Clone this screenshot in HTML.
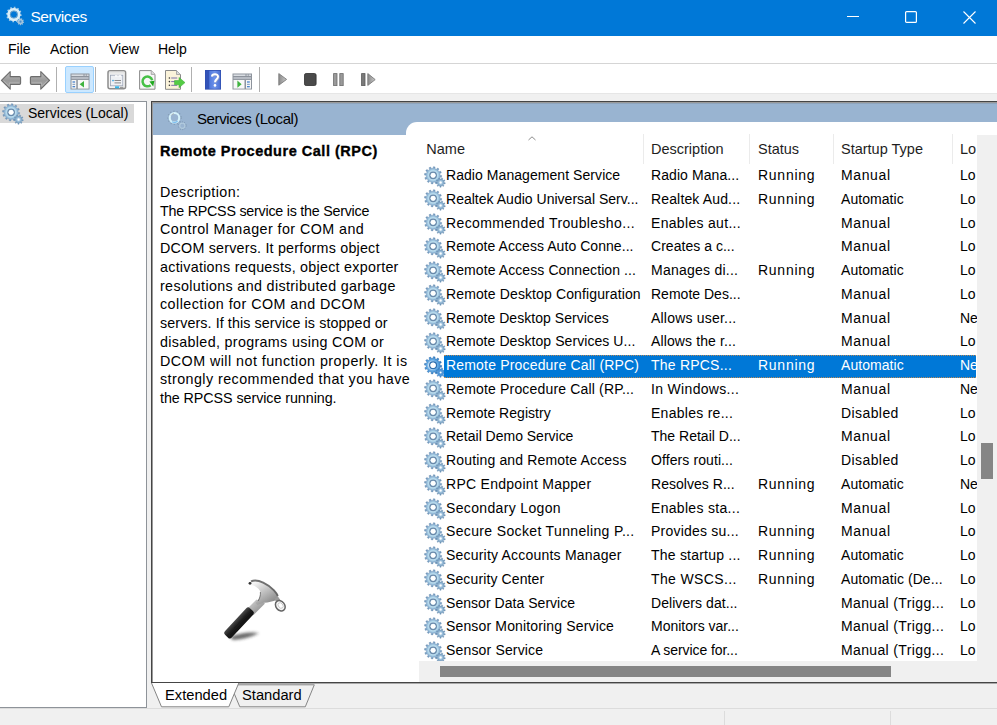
<!DOCTYPE html>
<html><head><meta charset="utf-8">
<style>
*{box-sizing:border-box}
html,body{margin:0;padding:0}
body{width:997px;height:725px;overflow:hidden;position:relative;background:#f0f0f0;font-family:"Liberation Sans",sans-serif;color:#000}
.abs{position:absolute}
svg.abs{overflow:visible}
#title{left:0;top:0;width:997px;height:36px;background:#0078d7}
#title .t{position:absolute;left:30.4px;top:7.6px;font-size:15.5px;letter-spacing:-0.37px;color:#fff;line-height:18px}
#menu{left:0;top:36px;width:997px;height:27px;background:#fff}
#menu span{position:absolute;top:5px;font-size:14px;line-height:16px}
#mline{left:0;top:63px;width:997px;height:1px;background:#d5d5d5}
#tool{left:0;top:64px;width:997px;height:29px;background:#fff}
.sep{position:absolute;top:67px;width:1px;height:25px;background:#b0b0b0}
#left{left:0;top:101px;width:147px;height:607px;background:#fff;border:1px solid #8e9399;border-left:none}
#right{left:151px;top:101px;width:846px;height:582px;background:#fff;border-top:1px solid #454545;border-left:1px solid #454545;border-bottom:1px solid #454545;box-shadow:inset 1px 1px 0 #9a9a9a}
#hdr{left:153px;top:103px;width:844px;height:32px;background:#99b4d1}
#tab{left:406px;top:122px;width:591px;height:14px;background:#fff;border-top-left-radius:11px}
.hdrt{position:absolute;left:197px;top:110px;font-size:15px;line-height:18px;color:#000}
.dt{position:absolute;left:160px;font-size:14.5px;line-height:18px;color:#000;white-space:nowrap;-webkit-text-stroke:0.35px #000}
.dl{position:absolute;left:160px;font-size:14.3px;line-height:18px;color:#000;white-space:nowrap}
.colh{position:absolute;top:140.5px;font-size:14.5px;line-height:17px;color:#1e1e1e}
.csep{position:absolute;top:134px;width:1px;height:30px;background:#ebebeb}
.row{position:absolute;left:420px;width:557px;height:23.75px}
.row .gi{position:absolute;left:3.5px;top:2.5px}
.row span{position:absolute;top:4px;font-size:14px;line-height:17px;white-space:nowrap;color:#000}
.row .c0{left:26px}.row .c1{left:231px}.row .c2{left:338px}.row .c3{left:421px}.row .c4{left:540px}
.row .hl{display:none}
.row.sel .hl{display:block;position:absolute;left:24px;top:1.8px;width:532px;height:22.8px;background:#0078d7;border-top:1px dotted #b88a5a;border-bottom:1px dotted #b88a5a}
.row.sel span{color:#fff}
#vtrack{left:977px;top:135px;width:20px;height:547px;background:#f0f0f0}
#vthumb{left:981px;top:443px;width:12px;height:36px;background:#858585}
#htrack{left:419px;top:661px;width:558px;height:21px;background:#f0f0f0}
#hthumb{left:440px;top:666px;width:451px;height:11px;background:#858585}
#status{left:0;top:708px;width:997px;height:17px;background:#f0f0f0;border-top:1px solid #dcdcdc}
.ssep{position:absolute;top:711px;width:1px;height:14px;background:#dcdcdc}
.tabt{position:absolute;top:687px;font-size:14.7px;line-height:17px}
</style></head><body>
<svg width="0" height="0" style="position:absolute">
<defs>
<radialGradient id="gg" cx="0.5" cy="0.5" r="0.5">
<stop offset="0.3" stop-color="#d6edf8"/><stop offset="0.58" stop-color="#b2d7eb"/><stop offset="0.8" stop-color="#88aed0"/><stop offset="1" stop-color="#5f86ad"/>
</radialGradient>
<radialGradient id="gg2" cx="0.5" cy="0.5" r="0.5">
<stop offset="0" stop-color="#f0f8fc"/><stop offset="0.4" stop-color="#9dc1dc"/><stop offset="1" stop-color="#5d85ac"/>
</radialGradient>
<radialGradient id="ggs" cx="0.45" cy="0.5" r="0.55">
<stop offset="0.3" stop-color="#ffffff"/><stop offset="0.55" stop-color="#6aaee6"/><stop offset="0.85" stop-color="#3c8ad0"/><stop offset="1" stop-color="#2b6fb0"/>
</radialGradient>
<symbol id="gear" viewBox="0 0 22 22" overflow="visible">
<path d="M16.00 9.24 L17.70 9.55 L17.47 11.27 L15.75 11.13 L15.10 12.70 L16.42 13.82 L15.37 15.19 L13.95 14.21 L12.60 15.25 L13.18 16.87 L11.58 17.53 L10.84 15.98 L9.16 16.20 L8.85 17.90 L7.13 17.67 L7.27 15.95 L5.70 15.30 L4.58 16.62 L3.21 15.57 L4.19 14.15 L3.15 12.80 L1.53 13.38 L0.87 11.78 L2.42 11.04 L2.20 9.36 L0.50 9.05 L0.73 7.33 L2.45 7.47 L3.10 5.90 L1.78 4.78 L2.83 3.41 L4.25 4.39 L5.60 3.35 L5.02 1.73 L6.62 1.07 L7.36 2.62 L9.04 2.40 L9.35 0.70 L11.07 0.93 L10.93 2.65 L12.50 3.30 L13.62 1.98 L14.99 3.03 L14.01 4.45 L15.05 5.80 L16.67 5.22 L17.33 6.82 L15.78 7.56Z" fill="url(#gg)" stroke="#7d9fbf" stroke-width="0.5"/>
<circle cx="9.1" cy="9.3" r="3.2" fill="none" stroke="#6a8aab" stroke-width="1.4"/>
<circle cx="9.1" cy="9.3" r="2.4" fill="#fff"/>
<path d="M20.10 16.60 L21.29 16.85 L21.05 18.00 L19.86 17.77 L19.22 18.82 L19.97 19.78 L19.04 20.51 L18.28 19.57 L17.11 19.96 L17.07 21.18 L15.89 21.15 L15.91 19.93 L14.77 19.48 L13.95 20.38 L13.07 19.60 L13.87 18.69 L13.28 17.61 L12.08 17.78 L11.90 16.61 L13.10 16.42 L13.34 15.21 L12.32 14.57 L12.93 13.56 L13.97 14.19 L14.93 13.42 L14.56 12.27 L15.68 11.89 L16.07 13.04 L17.30 13.07 L17.76 11.94 L18.85 12.38 L18.42 13.51 L19.34 14.32 L20.41 13.75 L20.98 14.79 L19.92 15.38Z" fill="url(#gg2)" stroke="#7094b6" stroke-width="0.4"/>
<circle cx="16.6" cy="16.5" r="1" fill="#fff"/>
</symbol>
<symbol id="gearsel" viewBox="0 0 22 22" overflow="visible">
<path d="M16.00 9.24 L17.70 9.55 L17.47 11.27 L15.75 11.13 L15.10 12.70 L16.42 13.82 L15.37 15.19 L13.95 14.21 L12.60 15.25 L13.18 16.87 L11.58 17.53 L10.84 15.98 L9.16 16.20 L8.85 17.90 L7.13 17.67 L7.27 15.95 L5.70 15.30 L4.58 16.62 L3.21 15.57 L4.19 14.15 L3.15 12.80 L1.53 13.38 L0.87 11.78 L2.42 11.04 L2.20 9.36 L0.50 9.05 L0.73 7.33 L2.45 7.47 L3.10 5.90 L1.78 4.78 L2.83 3.41 L4.25 4.39 L5.60 3.35 L5.02 1.73 L6.62 1.07 L7.36 2.62 L9.04 2.40 L9.35 0.70 L11.07 0.93 L10.93 2.65 L12.50 3.30 L13.62 1.98 L14.99 3.03 L14.01 4.45 L15.05 5.80 L16.67 5.22 L17.33 6.82 L15.78 7.56Z" fill="url(#ggs)" stroke="#2f6fae" stroke-width="0.5"/>
<circle cx="9.1" cy="9.3" r="3.4" fill="none" stroke="#2f6fae" stroke-width="1.3"/>
<circle cx="9.1" cy="9.3" r="2.5" fill="#fff"/>
<path d="M20.10 16.60 L21.29 16.85 L21.05 18.00 L19.86 17.77 L19.22 18.82 L19.97 19.78 L19.04 20.51 L18.28 19.57 L17.11 19.96 L17.07 21.18 L15.89 21.15 L15.91 19.93 L14.77 19.48 L13.95 20.38 L13.07 19.60 L13.87 18.69 L13.28 17.61 L12.08 17.78 L11.90 16.61 L13.10 16.42 L13.34 15.21 L12.32 14.57 L12.93 13.56 L13.97 14.19 L14.93 13.42 L14.56 12.27 L15.68 11.89 L16.07 13.04 L17.30 13.07 L17.76 11.94 L18.85 12.38 L18.42 13.51 L19.34 14.32 L20.41 13.75 L20.98 14.79 L19.92 15.38Z" fill="#4f96d8" stroke="#2f6fae" stroke-width="0.4"/>
<circle cx="16.6" cy="16.5" r="1" fill="#fff"/>
</symbol>
<linearGradient id="arrowg" x1="0" y1="0" x2="0" y2="1">
<stop offset="0" stop-color="#bdbdbd"/><stop offset="0.5" stop-color="#9a9a9a"/><stop offset="1" stop-color="#a8a8a8"/>
</linearGradient>
<linearGradient id="playg" x1="0" y1="0" x2="1" y2="0">
<stop offset="0" stop-color="#8a8a8a"/><stop offset="1" stop-color="#c8c8c8"/>
</linearGradient>
</defs></svg>

<div id="title" class="abs">
<svg class="abs" style="left:4px;top:5px" width="22" height="22">
<path d="M16.19 9.22 L17.70 9.46 L17.54 11.09 L16.01 11.02 L15.49 12.41 L16.67 13.37 L15.72 14.69 L14.43 13.87 L13.29 14.81 L13.83 16.24 L12.35 16.91 L11.64 15.56 L10.18 15.79 L9.94 17.30 L8.31 17.14 L8.38 15.61 L6.99 15.09 L6.03 16.27 L4.71 15.32 L5.53 14.03 L4.59 12.89 L3.16 13.43 L2.49 11.95 L3.84 11.24 L3.61 9.78 L2.10 9.54 L2.26 7.91 L3.79 7.98 L4.31 6.59 L3.13 5.63 L4.08 4.31 L5.37 5.13 L6.51 4.19 L5.97 2.76 L7.45 2.09 L8.16 3.44 L9.62 3.21 L9.86 1.70 L11.49 1.86 L11.42 3.39 L12.81 3.91 L13.77 2.73 L15.09 3.68 L14.27 4.97 L15.21 6.11 L16.64 5.57 L17.31 7.05 L15.96 7.76Z M13.90 9.50 A4.0 4.0 0 1 0 5.90 9.50 A4.0 4.0 0 1 0 13.90 9.50Z" fill="#c4dcea" fill-rule="evenodd" opacity="0.85"/>
<circle cx="9.9" cy="9.5" r="5.3" fill="none" stroke="#d9eef8" stroke-width="2.6"/>
<circle cx="9.9" cy="9.5" r="3.6" fill="none" stroke="#8fb0c8" stroke-width="0.8"/>
<path d="M19.30 16.72 L20.09 16.92 L19.89 17.90 L19.09 17.77 L18.63 18.52 L19.11 19.18 L18.33 19.80 L17.79 19.18 L16.96 19.46 L16.91 20.28 L15.91 20.25 L15.90 19.43 L15.08 19.11 L14.52 19.70 L13.76 19.04 L14.28 18.41 L13.86 17.64 L13.05 17.72 L12.90 16.73 L13.70 16.58 L13.88 15.72 L13.20 15.27 L13.72 14.41 L14.43 14.81 L15.12 14.26 L14.89 13.48 L15.84 13.16 L16.13 13.92 L17.01 13.95 L17.34 13.20 L18.27 13.57 L18.00 14.34 L18.66 14.92 L19.39 14.56 L19.87 15.44 L19.17 15.86Z" fill="#b4ccdc" opacity="0.9"/>
<circle cx="16.5" cy="16.7" r="1.1" fill="#4a8fd0"/>
</svg>
<div class="t">Services</div>
<svg class="abs" style="left:847px;top:16px" width="12" height="1"><rect width="12" height="1" fill="#fff"/></svg>
<svg class="abs" style="left:905px;top:11px" width="12" height="12"><rect x="0.6" y="0.6" width="10.8" height="10.8" rx="1" fill="none" stroke="#fff" stroke-width="1.2"/></svg>
<svg class="abs" style="left:963px;top:11px" width="13" height="13"><path d="M0.5 0.5L12.5 12.5M12.5 0.5L0.5 12.5" stroke="#fff" stroke-width="1.1"/></svg>
</div>

<div id="menu" class="abs">
<span style="left:8px">File</span><span style="left:50px">Action</span><span style="left:109px">View</span><span style="left:158px">Help</span>
</div>
<div id="mline" class="abs"></div>
<div id="tool" class="abs"></div>
<div class="abs" style="left:0;top:93px;width:997px;height:1px;background:#e6e6e6"></div>

<!-- back / forward -->
<svg class="abs" style="left:0;top:70px" width="24" height="22"><path d="M1.4 10.3L10.2 1.6V6.6H19.4Q20.6 6.6 20.6 7.8V13.2Q20.6 14.4 19.4 14.4H10.2V19.2Z" fill="url(#arrowg)" stroke="#6c6c6c" stroke-width="1.1" stroke-linejoin="round"/><path d="M3.5 10.6L9.4 16.2V12.9H19.2" fill="none" stroke="#c4c4c4" stroke-width="0.7" opacity="0.8"/></svg>
<svg class="abs" style="left:29px;top:70px" width="24" height="22"><path d="M20.6 10.3L11.8 1.6V6.6H2.6Q1.4 6.6 1.4 7.8V13.2Q1.4 14.4 2.6 14.4H11.8V19.2Z" fill="url(#arrowg)" stroke="#6c6c6c" stroke-width="1.1" stroke-linejoin="round"/><path d="M2.8 12.9H12.6V16.2L18.5 10.6" fill="none" stroke="#c4c4c4" stroke-width="0.7" opacity="0.8"/></svg>
<div class="sep" style="left:56px"></div>
<!-- show/hide console tree (pressed) -->
<div class="abs" style="left:65px;top:66px;width:29px;height:27px;background:#cce8ff;border:1px solid #99d1ff;border-radius:2px"></div>
<svg class="abs" style="left:70px;top:73px" width="20" height="17">
<rect x="0.5" y="0.5" width="19" height="16" fill="#8d939c"/>
<rect x="1.5" y="1.5" width="12" height="1.4" fill="#e2e6ea"/>
<rect x="14.5" y="1.5" width="1.3" height="1.4" fill="#dfe3e8"/><rect x="16.6" y="1.5" width="2" height="1.4" fill="#dfe3e8"/>
<rect x="1.5" y="4" width="17" height="2.2" fill="#b7bcc4"/>
<rect x="1.5" y="7" width="4.8" height="8.6" fill="#f6f6f6"/>
<rect x="7.8" y="7" width="10.8" height="8.6" fill="#f8f8f8"/>
<rect x="2.5" y="8.4" width="2.6" height="1.2" fill="#3a78c8"/><rect x="2.5" y="10.8" width="2.6" height="1.2" fill="#8fa9c8"/><rect x="2.5" y="13.1" width="2.6" height="1.2" fill="#3a78c8"/>
<path d="M9.6 11.2L14 7.9V14.6Z" fill="#3fb33f"/>
</svg>
<div class="sep" style="left:95px"></div>
<!-- properties -->
<svg class="abs" style="left:107px;top:70px" width="20" height="20">
<rect x="1" y="0.8" width="17.6" height="18" rx="2" fill="#f4f4f4" stroke="#8c8c8c" stroke-width="1.5"/>
<rect x="2" y="1.6" width="15.5" height="2" fill="#e4e4e4"/>
<rect x="3.4" y="5.2" width="12.4" height="10.6" fill="#eef0f4" stroke="#9aa3b4" stroke-width="0.8"/>
<rect x="8" y="5.2" width="2.5" height="1.4" fill="#fff"/><rect x="11.5" y="5.2" width="2.5" height="1.4" fill="#fff"/>
<circle cx="6" cy="10.6" r="0.8" fill="#2a9fe0"/><rect x="7.5" y="10" width="6.5" height="1" fill="#8a8a8a"/>
<rect x="7.5" y="12.4" width="6.5" height="1" fill="#8a8a8a"/>
<rect x="8" y="16.3" width="4.2" height="2" fill="#32b4e8"/><rect x="13" y="16.8" width="3.5" height="1.5" fill="#9a9a9a"/>
</svg>
<!-- refresh -->
<svg class="abs" style="left:138px;top:70px" width="20" height="20">
<path d="M1.6 0.6H13.2L17 4.4V19.2H1.6Z" fill="#f7f7f7" stroke="#8a8a8a" stroke-width="1"/>
<path d="M13.2 0.6V4.4H17" fill="#dcdcdc" stroke="#9a9a9a" stroke-width="0.8"/>
<path d="M12.6 15.2A4.9 4.9 0 1 1 14.2 10.2" fill="none" stroke="#46c046" stroke-width="2.5"/>
<path d="M11.4 11.6L16.4 10.8L15.2 16.4Z" fill="#1fa81f"/>
</svg>
<!-- export list -->
<svg class="abs" style="left:164px;top:70px" width="24" height="20">
<path d="M1.5 0.5H12.5L16.5 4.5V19.3H1.5Z" fill="#fbf3da" stroke="#8a8a8a" stroke-width="1"/>
<path d="M12.5 0.5V4.5H16.5" fill="#dadada" stroke="#9a9a9a" stroke-width="0.8"/>
<circle cx="5.4" cy="8" r="0.8" fill="#333"/><circle cx="5.4" cy="11.6" r="0.8" fill="#333"/><circle cx="5.4" cy="15.3" r="0.8" fill="#333"/>
<rect x="7.2" y="7.5" width="6" height="1" fill="#7a72a8"/><rect x="7.2" y="11.1" width="6" height="1" fill="#7a72a8"/><rect x="7.2" y="14.8" width="6" height="1" fill="#7a72a8"/>
<path d="M10.5 10.5H15V7.4L21 12.6L15 17.8V14.7H10.5Z" fill="#55cc44" stroke="#3aa838" stroke-width="0.5"/>
</svg>
<div class="sep" style="left:191px"></div>
<!-- help -->
<svg class="abs" style="left:205px;top:70px" width="17" height="20">
<defs><linearGradient id="hb" x1="0" y1="0" x2="1" y2="0"><stop offset="0" stop-color="#4f78dc"/><stop offset="0.5" stop-color="#6e93ea"/><stop offset="1" stop-color="#4a6fd4"/></linearGradient></defs>
<rect x="0" y="0" width="16" height="19.6" fill="#2f4fb0"/>
<rect x="0.6" y="0.6" width="3.6" height="18.4" fill="#3353b8"/>
<rect x="4.2" y="0.8" width="11" height="18" fill="url(#hb)"/>
<path d="M7 6.4C7 3.6 13 3.3 13 6.6C13 9.2 10 9.4 10 12.2" fill="none" stroke="#8a9ac8" stroke-width="2.4" transform="translate(0.5,0.5)"/>
<path d="M7 6.4C7 3.6 13 3.3 13 6.6C13 9.2 10 9.4 10 12.2" fill="none" stroke="#fff" stroke-width="2"/>
<circle cx="10" cy="15.4" r="1.3" fill="#fff"/>
</svg>
<!-- show action pane -->
<svg class="abs" style="left:232px;top:73px" width="21" height="17">
<rect x="0.5" y="0.5" width="19.5" height="16" fill="#8d939c"/>
<rect x="1.5" y="1.5" width="12" height="1.4" fill="#e2e6ea"/>
<rect x="14.5" y="1.5" width="1.3" height="1.4" fill="#dfe3e8"/><rect x="16.6" y="1.5" width="2.4" height="1.4" fill="#dfe3e8"/>
<rect x="1.5" y="4" width="17.5" height="2.2" fill="#b7bcc4"/>
<rect x="1.5" y="7" width="11" height="8.6" fill="#f8f8f8"/>
<rect x="14" y="7" width="5" height="8.6" fill="#f6f6f6"/>
<rect x="15" y="8.4" width="2.8" height="1.2" fill="#3a78c8"/><rect x="15" y="10.8" width="2.8" height="1.2" fill="#8fa9c8"/><rect x="15" y="13.1" width="2.8" height="1.2" fill="#3a78c8"/>
<path d="M9.6 11.2L5.4 7.6V14.8Z" fill="#3fb33f"/>
</svg>
<div class="sep" style="left:259px"></div>
<!-- play/stop/pause/restart -->
<svg class="abs" style="left:278px;top:73px" width="10" height="13"><path d="M0.8 0.6L8.6 6.4L0.8 12.2Z" fill="url(#playg)" stroke="#7c7c7c" stroke-width="0.9"/></svg>
<svg class="abs" style="left:304px;top:73px" width="13" height="13"><rect x="0.5" y="0.5" width="11.6" height="12" rx="1.6" fill="#4a4a4a" stroke="#2e2e2e" stroke-width="0.8"/></svg>
<svg class="abs" style="left:333px;top:73px" width="12" height="13"><rect x="0.6" y="0.6" width="3.4" height="12" fill="#9a9a9a" stroke="#6c6c6c" stroke-width="0.8"/><rect x="6.8" y="0.6" width="3.4" height="12" fill="#9a9a9a" stroke="#6c6c6c" stroke-width="0.8"/></svg>
<svg class="abs" style="left:361px;top:73px" width="16" height="13"><rect x="0.6" y="0.6" width="3.4" height="12" fill="#7a7a7a" stroke="#5a5a5a" stroke-width="0.8"/><path d="M6.8 0.6L14.2 6.6L6.8 12.4Z" fill="url(#playg)" stroke="#7c7c7c" stroke-width="0.9"/></svg>

<div id="left" class="abs"></div>
<div class="abs" style="left:0;top:104px;width:134px;height:19px;background:#d9d9d9"></div>
<svg class="abs" style="left:2px;top:103px" width="22" height="22"><use href="#gear" width="22" height="22"/></svg>
<div class="abs" style="left:28px;top:105px;font-size:14px;line-height:16px">Services (Local)</div>

<div id="right" class="abs"></div>
<div class="abs" style="left:152px;top:683px;width:845px;height:1px;background:#a8a8a8"></div>
<div id="hdr" class="abs"></div>
<div class="abs" style="left:153px;top:103px;width:844px;height:1px;background:#8ea4bc"></div>
<div id="tab" class="abs"></div>
<svg class="abs" style="left:164px;top:108px" width="24" height="24">
<g stroke="#7b93ad" stroke-width="1.2" stroke-dasharray="1.2 2.1" fill="none" opacity="0.8"><circle cx="10.5" cy="9.8" r="6.6"/></g>
<circle cx="10.5" cy="9.8" r="4.75" fill="none" stroke="#d6f2fa" stroke-width="2.1"/>
<path d="M7.2 7.5A4 4 0 0 1 10 5.6" fill="none" stroke="#9a8f8a" stroke-width="0.8" opacity="0.7"/>
<path d="M8 13.8A4.6 4.6 0 0 0 13.6 13" fill="none" stroke="#7fc0f0" stroke-width="1.2"/>
<circle cx="18.3" cy="17.7" r="2.6" fill="none" stroke="#b8d0e0" stroke-width="1.2" opacity="0.8"/>
<g stroke="#6c85a0" stroke-width="1" stroke-dasharray="0.9 1.6" fill="none" opacity="0.7"><circle cx="18.3" cy="17.7" r="3.9"/></g>
</svg>
<div class="hdrt" style="letter-spacing:-0.400px;">Services (Local)</div>

<div class="dt" id="dtitle" style="top:142px;font-weight:bold;letter-spacing:0.519px;">Remote Procedure Call (RPC)</div>
<div class="dl" id="ddesc" style="top:182.7px;letter-spacing:0.409px;">Description:</div>
<div class="dl" id="d0" style="top:201.50px;letter-spacing:-0.242px;">The RPCSS service is the Service</div>
<div class="dl" id="d1" style="top:220.27px;letter-spacing:0.442px;">Control Manager for COM and</div>
<div class="dl" id="d2" style="top:239.04px;letter-spacing:0.210px;">DCOM servers. It performs object</div>
<div class="dl" id="d3" style="top:257.81px;letter-spacing:0.264px;">activations requests, object exporter</div>
<div class="dl" id="d4" style="top:276.58px;letter-spacing:0.353px;">resolutions and distributed garbage</div>
<div class="dl" id="d5" style="top:295.35px;letter-spacing:0.462px;">collection for COM and DCOM</div>
<div class="dl" id="d6" style="top:314.12px;letter-spacing:0.095px;">servers. If this service is stopped or</div>
<div class="dl" id="d7" style="top:332.89px;letter-spacing:0.333px;">disabled, programs using COM or</div>
<div class="dl" id="d8" style="top:351.66px;letter-spacing:0.459px;">DCOM will not function properly. It is</div>
<div class="dl" id="d9" style="top:370.43px;letter-spacing:0.439px;">strongly recommended that you have</div>
<div class="dl" id="d10" style="top:389.20px;letter-spacing:-0.060px;">the RPCSS service running.</div>

<!-- hammer -->
<svg class="abs" style="left:215px;top:572px" width="80" height="72">
<defs>
<linearGradient id="hm" x1="0.2" y1="0.1" x2="0.8" y2="0.9"><stop offset="0" stop-color="#f4f4f4"/><stop offset="0.45" stop-color="#c4c4c4"/><stop offset="1" stop-color="#8a8a8a"/></linearGradient>
<linearGradient id="sh" x1="0" y1="0" x2="1" y2="1"><stop offset="0" stop-color="#e0e0e0"/><stop offset="1" stop-color="#7a7a7a"/></linearGradient>
<linearGradient id="gr" x1="0" y1="0" x2="0" y2="1"><stop offset="0" stop-color="#4a4a4a"/><stop offset="0.5" stop-color="#1e1e1e"/><stop offset="1" stop-color="#101010"/></linearGradient>
<filter id="bl" x="-50%" y="-50%" width="200%" height="200%"><feGaussianBlur stdDeviation="1.5"/></filter>
<filter id="bl2" x="-10%" y="-10%" width="120%" height="120%"><feGaussianBlur stdDeviation="0.4"/></filter>
</defs>
<g transform="translate(-215,-572)">
<path d="M230 637Q244 631 259 633Q248 639 233 640Z" fill="#2a2a2a" opacity="0.7" filter="url(#bl)"/>
<g filter="url(#bl2)">
<path d="M246 610L256.5 599.5L265 603.5L253.5 615Z" fill="url(#sh)"/>
<path d="M249 582C252 579.8 258 579.8 263.2 582.2C267 584 271 586.5 274 590C276 592 277.5 594 278.3 595.6L276.5 600C273 601.5 268 602.5 264.5 602.8C262 603.2 259.5 604 257.5 605L255.5 603C258.5 600 260.5 596 260.4 592C259.5 589 256 586.5 253.5 585.6C252 585 250.5 584.8 249.5 584.8Z" fill="url(#hm)"/>
<path d="M251 581.4C254 580 258 580.2 263.2 582.6C267 584.4 271 587 274 590.4C275.6 592.2 277 594 277.8 595.8" fill="none" stroke="#5c5c5c" stroke-width="1.9" opacity="0.85"/>
<path d="M258.2 601C260 598 260.6 595 260.4 592" fill="none" stroke="#666" stroke-width="0.8"/>
<path d="M274.5 598.5L278 596.5L281 601L277 604Z" fill="#9a9a9a"/>
<ellipse cx="280.3" cy="605.8" rx="4.4" ry="5.6" transform="rotate(-38 280.3 605.8)" fill="#f6f6f6" stroke="#666" stroke-width="1.5"/>
<ellipse cx="280.6" cy="605.5" rx="2.2" ry="3" transform="rotate(-38 280.6 605.5)" fill="#fff" stroke="#b0b0b0" stroke-width="0.6"/>
<circle cx="250" cy="583.3" r="1.4" fill="#333"/>
<g transform="translate(227.9,634.8) rotate(-46.9)"><rect x="-2" y="-4.7" width="36.5" height="9.4" rx="2.6" fill="url(#gr)"/></g>
</g>
</g>
</svg>

<div class="colh" style="left:426.3px">Name</div>
<svg class="abs" style="left:527.5px;top:135.5px" width="8" height="5"><path d="M0.5 4L4 0.8L7.5 4" fill="none" stroke="#8c8c8c" stroke-width="1"/></svg>
<div class="colh" style="left:651px">Description</div>
<div class="colh" style="left:758px">Status</div>
<div class="colh" style="left:841px">Startup Type</div>
<div class="colh" style="left:960px">Lo</div>
<div class="csep" style="left:643px"></div>
<div class="csep" style="left:749px"></div>
<div class="csep" style="left:833px"></div>
<div class="csep" style="left:952px"></div>

<div class="row" style="top:163.00px"><svg class="gi" width="22" height="22"><use href="#gear"/></svg><div class="hl"></div><span class="c0" style="letter-spacing:0.061px">Radio Management Service</span><span class="c1" style="letter-spacing:0.075px">Radio Mana...</span><span class="c2" style="letter-spacing:0.733px">Running</span><span class="c3" style="letter-spacing:0.620px">Manual</span><span class="c4">Lo</span></div>
<div class="row" style="top:186.75px"><svg class="gi" width="22" height="22"><use href="#gear"/></svg><div class="hl"></div><span class="c0" style="letter-spacing:0.017px">Realtek Audio Universal Serv...</span><span class="c1" style="letter-spacing:0.146px">Realtek Aud...</span><span class="c2" style="letter-spacing:0.733px">Running</span><span class="c3" style="letter-spacing:0.062px">Automatic</span><span class="c4">Lo</span></div>
<div class="row" style="top:210.50px"><svg class="gi" width="22" height="22"><use href="#gear"/></svg><div class="hl"></div><span class="c0" style="letter-spacing:0.367px">Recommended Troublesho...</span><span class="c1" style="letter-spacing:0.315px">Enables aut...</span><span class="c2"></span><span class="c3" style="letter-spacing:0.620px">Manual</span><span class="c4">Lo</span></div>
<div class="row" style="top:234.25px"><svg class="gi" width="22" height="22"><use href="#gear"/></svg><div class="hl"></div><span class="c0" style="letter-spacing:0.058px">Remote Access Auto Conne...</span><span class="c1" style="letter-spacing:0.031px">Creates a c...</span><span class="c2"></span><span class="c3" style="letter-spacing:0.620px">Manual</span><span class="c4">Lo</span></div>
<div class="row" style="top:258.00px"><svg class="gi" width="22" height="22"><use href="#gear"/></svg><div class="hl"></div><span class="c0" style="letter-spacing:0.089px">Remote Access Connection ...</span><span class="c1" style="letter-spacing:0.242px">Manages di...</span><span class="c2" style="letter-spacing:0.733px">Running</span><span class="c3" style="letter-spacing:0.062px">Automatic</span><span class="c4">Lo</span></div>
<div class="row" style="top:281.75px"><svg class="gi" width="22" height="22"><use href="#gear"/></svg><div class="hl"></div><span class="c0" style="letter-spacing:0.119px">Remote Desktop Configuration</span><span class="c1" style="letter-spacing:0.008px">Remote Des...</span><span class="c2"></span><span class="c3" style="letter-spacing:0.620px">Manual</span><span class="c4">Lo</span></div>
<div class="row" style="top:305.50px"><svg class="gi" width="22" height="22"><use href="#gear"/></svg><div class="hl"></div><span class="c0" style="letter-spacing:0.041px">Remote Desktop Services</span><span class="c1" style="letter-spacing:0.208px">Allows user...</span><span class="c2"></span><span class="c3" style="letter-spacing:0.620px">Manual</span><span class="c4">Ne</span></div>
<div class="row" style="top:329.25px"><svg class="gi" width="22" height="22"><use href="#gear"/></svg><div class="hl"></div><span class="c0" style="letter-spacing:0.067px">Remote Desktop Services U...</span><span class="c1" style="letter-spacing:0.121px">Allows the r...</span><span class="c2"></span><span class="c3" style="letter-spacing:0.620px">Manual</span><span class="c4">Lo</span></div>
<div class="row sel" style="top:353.00px"><svg class="gi" width="22" height="22"><use href="#gearsel"/></svg><div class="hl"></div><span class="c0" style="letter-spacing:0.181px">Remote Procedure Call (RPC)</span><span class="c1" style="letter-spacing:0.220px">The RPCS...</span><span class="c2" style="letter-spacing:0.733px">Running</span><span class="c3" style="letter-spacing:0.062px">Automatic</span><span class="c4">Ne</span></div>
<div class="row" style="top:376.75px"><svg class="gi" width="22" height="22"><use href="#gear"/></svg><div class="hl"></div><span class="c0" style="letter-spacing:0.167px">Remote Procedure Call (RP...</span><span class="c1" style="letter-spacing:0.325px">In Windows...</span><span class="c2"></span><span class="c3" style="letter-spacing:0.620px">Manual</span><span class="c4">Ne</span></div>
<div class="row" style="top:400.50px"><svg class="gi" width="22" height="22"><use href="#gear"/></svg><div class="hl"></div><span class="c0" style="letter-spacing:0.029px">Remote Registry</span><span class="c1" style="letter-spacing:0.275px">Enables re...</span><span class="c2"></span><span class="c3" style="letter-spacing:0.414px">Disabled</span><span class="c4">Lo</span></div>
<div class="row" style="top:424.25px"><svg class="gi" width="22" height="22"><use href="#gear"/></svg><div class="hl"></div><span class="c0" style="letter-spacing:-0.011px">Retail Demo Service</span><span class="c1" style="letter-spacing:0.007px">The Retail D...</span><span class="c2"></span><span class="c3" style="letter-spacing:0.620px">Manual</span><span class="c4">Lo</span></div>
<div class="row" style="top:448.00px"><svg class="gi" width="22" height="22"><use href="#gear"/></svg><div class="hl"></div><span class="c0" style="letter-spacing:0.158px">Routing and Remote Access</span><span class="c1" style="letter-spacing:0.093px">Offers routi...</span><span class="c2"></span><span class="c3" style="letter-spacing:0.414px">Disabled</span><span class="c4">Lo</span></div>
<div class="row" style="top:471.75px"><svg class="gi" width="22" height="22"><use href="#gear"/></svg><div class="hl"></div><span class="c0" style="letter-spacing:0.278px">RPC Endpoint Mapper</span><span class="c1" style="letter-spacing:0.033px">Resolves R...</span><span class="c2" style="letter-spacing:0.733px">Running</span><span class="c3" style="letter-spacing:0.062px">Automatic</span><span class="c4">Ne</span></div>
<div class="row" style="top:495.50px"><svg class="gi" width="22" height="22"><use href="#gear"/></svg><div class="hl"></div><span class="c0" style="letter-spacing:0.350px">Secondary Logon</span><span class="c1" style="letter-spacing:0.308px">Enables sta...</span><span class="c2"></span><span class="c3" style="letter-spacing:0.620px">Manual</span><span class="c4">Lo</span></div>
<div class="row" style="top:519.25px"><svg class="gi" width="22" height="22"><use href="#gear"/></svg><div class="hl"></div><span class="c0" style="letter-spacing:0.352px">Secure Socket Tunneling P...</span><span class="c1" style="letter-spacing:0.223px">Provides su...</span><span class="c2" style="letter-spacing:0.733px">Running</span><span class="c3" style="letter-spacing:0.620px">Manual</span><span class="c4">Lo</span></div>
<div class="row" style="top:543.00px"><svg class="gi" width="22" height="22"><use href="#gear"/></svg><div class="hl"></div><span class="c0" style="letter-spacing:0.208px">Security Accounts Manager</span><span class="c1" style="letter-spacing:0.221px">The startup ...</span><span class="c2" style="letter-spacing:0.733px">Running</span><span class="c3" style="letter-spacing:0.062px">Automatic</span><span class="c4">Lo</span></div>
<div class="row" style="top:566.75px"><svg class="gi" width="22" height="22"><use href="#gear"/></svg><div class="hl"></div><span class="c0" style="letter-spacing:0.121px">Security Center</span><span class="c1" style="letter-spacing:0.370px">The WSCS...</span><span class="c2" style="letter-spacing:0.733px">Running</span><span class="c3" style="letter-spacing:0.080px">Automatic (De...</span><span class="c4">Lo</span></div>
<div class="row" style="top:590.50px"><svg class="gi" width="22" height="22"><use href="#gear"/></svg><div class="hl"></div><span class="c0" style="letter-spacing:0.039px">Sensor Data Service</span><span class="c1" style="letter-spacing:0.064px">Delivers dat...</span><span class="c2"></span><span class="c3" style="letter-spacing:0.360px">Manual (Trigg...</span><span class="c4">Lo</span></div>
<div class="row" style="top:614.25px"><svg class="gi" width="22" height="22"><use href="#gear"/></svg><div class="hl"></div><span class="c0" style="letter-spacing:0.154px">Sensor Monitoring Service</span><span class="c1" style="letter-spacing:-0.007px">Monitors var...</span><span class="c2"></span><span class="c3" style="letter-spacing:0.360px">Manual (Trigg...</span><span class="c4">Lo</span></div>
<div class="row" style="top:638.00px"><svg class="gi" width="22" height="22"><use href="#gear"/></svg><div class="hl"></div><span class="c0" style="letter-spacing:0.162px">Sensor Service</span><span class="c1" style="letter-spacing:-0.073px">A service for...</span><span class="c2"></span><span class="c3" style="letter-spacing:0.360px">Manual (Trigg...</span><span class="c4">Lo</span></div>

<div id="vtrack" class="abs"></div>
<div id="vthumb" class="abs"></div>
<div id="htrack" class="abs"></div>
<div id="hthumb" class="abs"></div>

<!-- tabs -->
<svg class="abs" style="left:148px;top:683px" width="175" height="26">
<path d="M82.5 1.8L91.8 23.8H157.3L166.3 1.8Z" fill="#f0f0f0" stroke="#858585" stroke-width="1"/>
<path d="M3.5 0L13.5 23.8H80.8L90.8 0Z" fill="#fff"/>
<path d="M3.5 0L13.5 23.8H80.8L90.8 0" fill="none" stroke="#858585" stroke-width="1"/>
</svg>
<div class="tabt" style="left:165px">Extended</div>
<div class="tabt" style="left:242px">Standard</div>

<div id="status" class="abs"></div>
<div class="ssep" style="left:724px"></div>
<div class="ssep" style="left:890px"></div>
</body></html>
